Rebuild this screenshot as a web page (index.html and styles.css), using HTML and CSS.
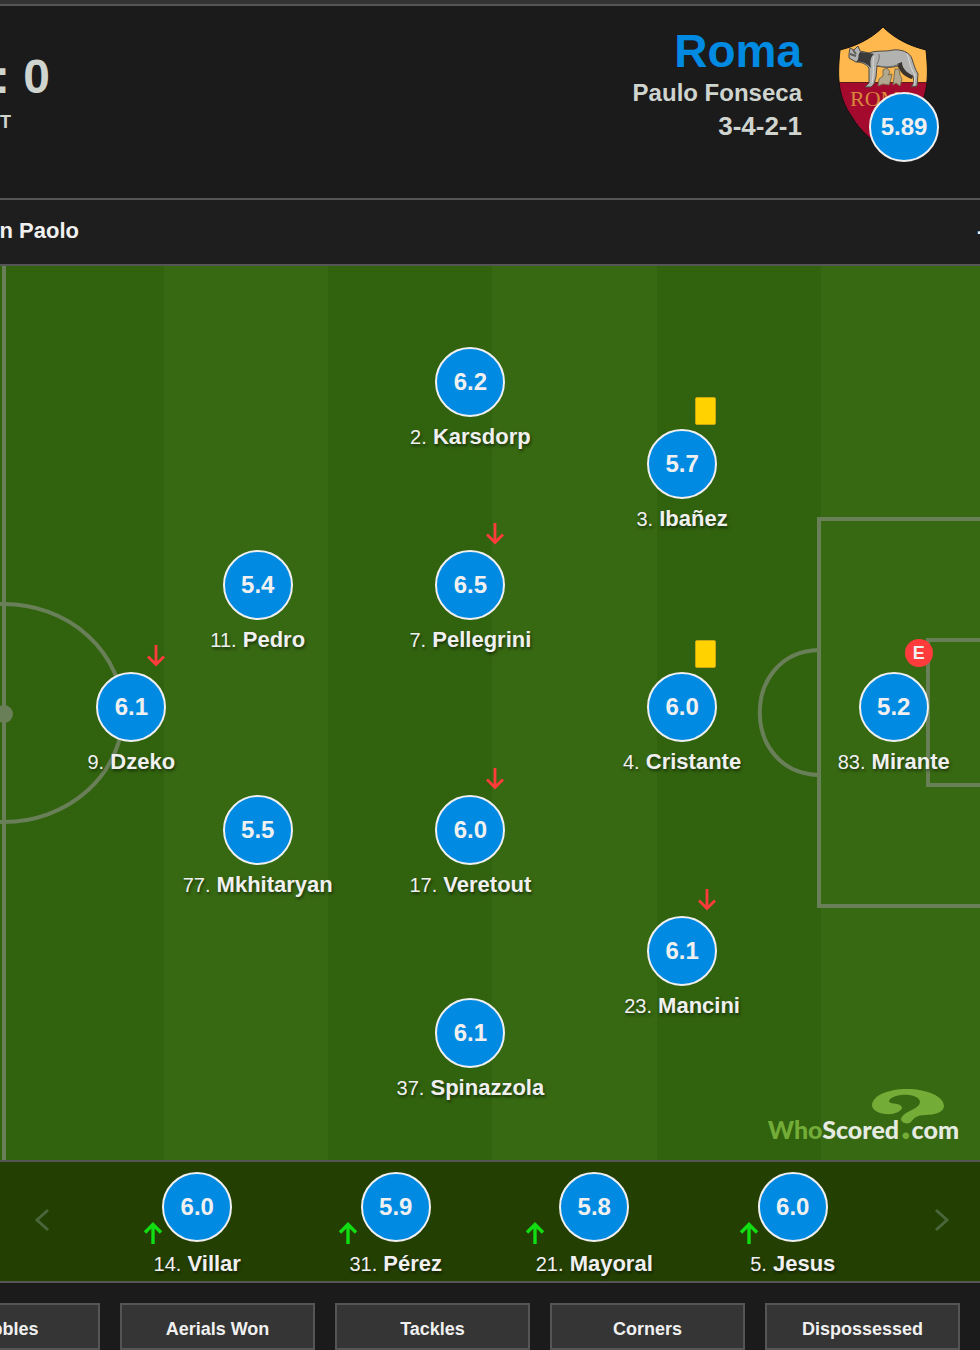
FILE: index.html
```html
<!DOCTYPE html>
<html lang="en">
<head>
    <meta charset="UTF-8">
    <meta name="viewport" content="width=device-width, initial-scale=1.0">
    <title>Roma - Match Centre</title>
    <link rel="stylesheet" href="styles.css">
</head>
<body>
    <svg class="symbols" aria-hidden="true">
        <symbol id="arrow-down" viewBox="0 0 20 24">
            <path d="M10 1V20M2 12.500L10 20.500L18 12.500" fill="none" stroke="currentColor" stroke-width="2.800"/>
        </symbol>
        <symbol id="arrow-up" viewBox="0 0 20 24">
            <path d="M10 23V3M2 11.500L10 3.500L18 11.500" fill="none" stroke="currentColor" stroke-width="3.400"/>
        </symbol>
    </svg>

    <header class="match-header">
        <div class="score">
            <div class="result">: 0</div>
            <div class="status">T</div>
        </div>
        <div class="team">
            <h1>Roma</h1>
            <div class="manager">Paulo Fonseca</div>
            <div class="formation">3-4-2-1</div>
        </div>
        <div class="crest">
            <svg viewBox="0 0 90 126" role="img" aria-label="Roma crest">
                <defs>
                    <clipPath id="shield">
                        <path d="M45 1C57 13 72 20 88 24C91 52 90 71 76 91C68 105 56 114 45 123C34 114 22 105 14 91C0 71 -1 52 2 24C18 20 33 13 45 1Z"/>
                    </clipPath>
                </defs>
                <g clip-path="url(#shield)">
                    <rect width="90" height="58" fill="#ffb84d"/>
                    <rect y="57" width="90" height="70" fill="#a30a2e"/>
                    <rect y="56" width="90" height="1" fill="#5e1a1c"/>
                </g>
                <path d="M45 1C57 13 72 20 88 24C91 52 90 71 76 91C68 105 56 114 45 123C34 114 22 105 14 91C0 71 -1 52 2 24C18 20 33 13 45 1Z" fill="none" stroke="#111" stroke-width="1"/>
                <path d="M11 28L12 22L16 24L20 20L22 25L31 27C39 24 47 26 55 24C63 23 72 26 74 33C76 39 77 43 80 48L79 60L73 61L76 57L75 50C69 48 65 44 63 39C55 42 48 42 39 40L38 51L36 58L33 61L27 61L31 57L31 42C28 38 24 36 18 36L11 32Z" fill="#b2b3b1" stroke="#4f493f" stroke-width="1"/>
                <path d="M22 26L31 27L36 28C32 31 32 37 33 42C29 38 25 35 18 36C22 33 19 30 22 26Z" fill="#393a39"/>
                <path d="M59 38L64 36C64 42 68 46 75 50L74 53C67 51 62 47 59 38Z" fill="#39352e"/>
                <path d="M12 28L18 30M15 24L18 28" fill="none" stroke="#5c5d5b" stroke-width="2"/>
                <path d="M36 30C34 36 36 42 35 50L34 57M69 28C72 36 72 42 77 49L76 59" fill="none" stroke="#dadbd8" stroke-width="1"/>
                <path d="M38 39C46 42 55 41 61 38M41 28C42 32 40 36 39 38" fill="none" stroke="#6e6f6c" stroke-width="1"/>
                <g fill="#b1a88f" stroke="#7a6c4c" stroke-width="1">
                    <path d="M45 44L49 42L52 46L50 49L54 48L53 53L51 59L45 58L40 60L41 53L45 50Z"/>
                    <path d="M57 43L61 43L62 49L64 53L62 60L58 57L55 59L56 51Z"/>
                </g>
                <text x="45" y="80" text-anchor="middle" class="crest-text">ROMA</text>
            </svg>
            <span class="rating team-rating">5.89</span>
        </div>
    </header>

    <div class="venue">
        <span class="stadium">n Paolo</span>
        <span class="venue-more">-</span>
    </div>

    <main class="pitch">
        <svg class="markings" viewBox="0 0 980 894" preserveAspectRatio="none" aria-hidden="true">
            <path d="M4 0V894"/>
            <ellipse cx="4" cy="447" rx="119" ry="109"/>
            <circle class="spot" cx="4" cy="448" r="9"/>
            <path d="M984 253H819V640H984"/>
            <path d="M984 374H928V519H984"/>
            <path d="M819 384C740 386 740 507 819 509"/>
        </svg>

        <div class="player forward row-4">
            <svg class="event"><use href="#arrow-down"/></svg>
            <span class="rating">6.1</span>
            <div class="name"><span>9.</span> Dzeko</div>
        </div>
        <div class="player attacker row-3">
            <span class="rating">5.4</span>
            <div class="name"><span>11.</span> Pedro</div>
        </div>
        <div class="player attacker row-5">
            <span class="rating">5.5</span>
            <div class="name"><span>77.</span> Mkhitaryan</div>
        </div>
        <div class="player midfielder row-1">
            <span class="rating">6.2</span>
            <div class="name"><span>2.</span> Karsdorp</div>
        </div>
        <div class="player midfielder row-3">
            <svg class="event"><use href="#arrow-down"/></svg>
            <span class="rating">6.5</span>
            <div class="name"><span>7.</span> Pellegrini</div>
        </div>
        <div class="player midfielder row-5">
            <svg class="event"><use href="#arrow-down"/></svg>
            <span class="rating">6.0</span>
            <div class="name"><span>17.</span> Veretout</div>
        </div>
        <div class="player midfielder row-7">
            <span class="rating">6.1</span>
            <div class="name"><span>37.</span> Spinazzola</div>
        </div>
        <div class="player defender row-2">
            <i class="card"></i>
            <span class="rating">5.7</span>
            <div class="name"><span>3.</span> Ibañez</div>
        </div>
        <div class="player defender row-4">
            <i class="card"></i>
            <span class="rating">6.0</span>
            <div class="name"><span>4.</span> Cristante</div>
        </div>
        <div class="player defender row-6">
            <svg class="event"><use href="#arrow-down"/></svg>
            <span class="rating">6.1</span>
            <div class="name"><span>23.</span> Mancini</div>
        </div>
        <div class="player keeper row-4">
            <span class="error">E</span>
            <span class="rating">5.2</span>
            <div class="name"><span>83.</span> Mirante</div>
        </div>

        <div class="brand">
            <svg viewBox="0 0 72 36" aria-hidden="true">
                <path d="M20 25C9 26 0 22 0 16C1 6 17 0 35 0C56 0 72 8 72 17C72 23 63 26 53 26C45 26 42 29 39 33C36 36 29 34 29 30C30 24 42 21 46 17C51 12 46 7 37 6C28 5 18 8 17 12C17 16 30 13 30 19C29 22 25 24 20 25Z" fill="#74ac38"/>
            </svg>
            <span class="brand-green">Who</span>Scored<span class="brand-dot">.</span>com
        </div>
    </main>

    <section class="subs">
        <button class="prev" aria-label="Previous">
            <svg viewBox="0 0 16 24"><path d="M14 2L3 12L14 22"/></svg>
        </button>
        <div class="subs-list">
            <div class="sub">
                <span class="rating">6.0</span>
                <div class="name"><svg class="on"><use href="#arrow-up"/></svg><span>14.</span> Villar</div>
            </div>
            <div class="sub">
                <span class="rating">5.9</span>
                <div class="name"><svg class="on"><use href="#arrow-up"/></svg><span>31.</span> Pérez</div>
            </div>
            <div class="sub">
                <span class="rating">5.8</span>
                <div class="name"><svg class="on"><use href="#arrow-up"/></svg><span>21.</span> Mayoral</div>
            </div>
            <div class="sub">
                <span class="rating">6.0</span>
                <div class="name"><svg class="on"><use href="#arrow-up"/></svg><span>5.</span> Jesus</div>
            </div>
        </div>
        <button class="next" aria-label="Next">
            <svg viewBox="0 0 16 24"><path d="M2 2L13 12L2 22"/></svg>
        </button>
    </section>

    <nav class="stats">
        <button>Dribbles</button>
        <button>Aerials Won</button>
        <button>Tackles</button>
        <button>Corners</button>
        <button>Dispossessed</button>
    </nav>
</body>
</html>
```
FILE: styles.css
```css
* {
    box-sizing: border-box;
}
body {
    margin: 0;
    border-top: 4px solid #333;
    background: #1b1b1b;
    color: #f0f0f0;
    font-family: "Liberation Sans", Arial, sans-serif;
    font-weight: bold;
    overflow-x: hidden;
}
button {
    font-family: inherit;
    font-weight: bold;
    cursor: pointer;
}
.symbols {
    display: none;
}

/* header */
.match-header {
    display: flex;
    height: 196px;
    padding: 20px 52px 0 0;
    border-top: 2px solid #555;
    border-bottom: 2px solid #555;
    color: #d0d4cf;
}
.score {
    width: 50px;
    padding-top: 22px;
}
.result {
    display: flex;
    justify-content: flex-end;
    font-size: 48px;
    line-height: 58px;
    white-space: nowrap;
}
.status {
    font-size: 18px;
    line-height: 32px;
}
.team {
    margin-left: auto;
    text-align: right;
}
.team h1 {
    margin: 0;
    color: #008ae2;
    font-size: 46px;
    line-height: 50px;
}
.manager {
    font-size: 24px;
    line-height: 34px;
}
.formation {
    font-size: 26px;
    line-height: 32px;
}
.crest {
    position: relative;
    width: 90px;
    margin-left: 36px;
}
.crest svg {
    display: block;
    width: 90px;
    height: 126px;
}
.crest-text {
    fill: #d9863a;
    font: 22px "Liberation Serif", serif;
}
.rating {
    display: flex;
    align-items: center;
    justify-content: center;
    width: 70px;
    height: 70px;
    border: 2px solid #f0f0f0;
    border-radius: 50%;
    background: #008ae2;
    color: #f0f0f0;
    font-size: 24px;
}
.team-rating {
    position: absolute;
    top: 66px;
    right: -11px;
}

/* venue bar */
.venue {
    display: flex;
    justify-content: space-between;
    height: 66px;
    border-bottom: 2px solid #555;
    background: #1e1e1e;
    font-size: 22px;
    line-height: 62px;
}
.stadium {
    display: flex;
    justify-content: flex-end;
    width: 79px;
    white-space: nowrap;
}
.venue-more {
    width: 3px;
}

/* pitch */
.pitch {
    position: relative;
    aspect-ratio: 980 / 894;
    background: repeating-linear-gradient(90deg, #31620e 0 16.75%, #376812 16.75% 33.5%);
    overflow: hidden;
}
.markings {
    position: absolute;
    width: 100%;
    height: 100%;
    fill: none;
    stroke: #697f58;
    stroke-width: 4px;
}
.markings .spot {
    fill: #697f58;
    stroke: none;
}
.player {
    position: absolute;
    width: 200px;
    margin: -35px 0 0 -100px;
}
.player .rating,
.sub .rating {
    margin: 0 auto;
}
.forward { left: 13.4%; }
.attacker { left: 26.3%; }
.midfielder { left: 48%; }
.defender { left: 69.6%; }
.keeper { left: 91.2%; }
.row-1 { top: 13%; }
.row-2 { top: 22.1%; }
.row-3 { top: 35.7%; }
.row-4 { top: 49.3%; }
.row-5 { top: 63.1%; }
.row-6 { top: 76.6%; }
.row-7 { top: 85.8%; }
.name {
    position: relative;
    width: max-content;
    margin: 6px auto 0;
    font-size: 22px;
    line-height: 28px;
    text-shadow: 1px 2px 3px rgba(0,0,0,0.5);
}
.name span {
    font-size: 20px;
    font-weight: normal;
}
.event,
.card,
.error {
    position: absolute;
}
.event {
    top: -28px;
    left: 115px;
    width: 20px;
    height: 24px;
    color: #ff3b3b;
}
.card {
    top: -32px;
    left: 113px;
    width: 21px;
    height: 28px;
    border: 1px solid #c9a614;
    border-radius: 2px;
    background: #ffd200;
}
.error {
    top: -33px;
    left: 111px;
    width: 28px;
    border-radius: 50%;
    background: #ff3b3b;
    font-size: 18px;
    line-height: 28px;
    text-align: center;
}
.brand {
    position: absolute;
    right: 21px;
    bottom: 15px;
    color: #e6ebe2;
    font-family: Lato, sans-serif;
    font-size: 25px;
    font-weight: 900;
    line-height: 32px;
}
.brand svg {
    position: absolute;
    right: 15px;
    bottom: 20px;
    width: 72px;
    height: 36px;
}
.brand-green,
.brand-dot {
    color: #74ac38;
}
.brand-dot {
    margin: 0 1px 0 2px;
    font-size: 40px;
    line-height: 24px;
}

/* substitutes */
.subs {
    display: flex;
    height: 123px;
    border-top: 2px solid #555;
    border-bottom: 2px solid #555;
    background: #243f02;
}
.prev,
.next {
    width: 98px;
    padding: 0 20px 0 6px;
    border: 0;
    background: none;
}
.next {
    width: 88px;
    padding: 0 0 0 12px;
}
.subs button svg {
    width: 16px;
    height: 24px;
    fill: none;
    stroke: #4a653a;
    stroke-width: 3px;
}
.subs-list {
    display: grid;
    grid-template-columns: repeat(4, 1fr);
    flex: 1;
    padding-top: 10px;
}
.sub .name {
    margin-top: 8px;
}
.on {
    position: absolute;
    top: -29px;
    left: -11px;
    width: 20px;
    height: 24px;
    color: #12dc12;
}

/* stat tabs, the first one runs off the left edge */
.stats {
    display: grid;
    grid-template-columns: repeat(5, 1fr);
    gap: 20px;
    margin: 20px 20px 0 -95px;
}
.stats button {
    height: 47px;
    padding: 5px 0 0;
    border: 2px solid #555;
    background: #353535;
    color: #f0f0f0;
    font-size: 18px;
}
```
